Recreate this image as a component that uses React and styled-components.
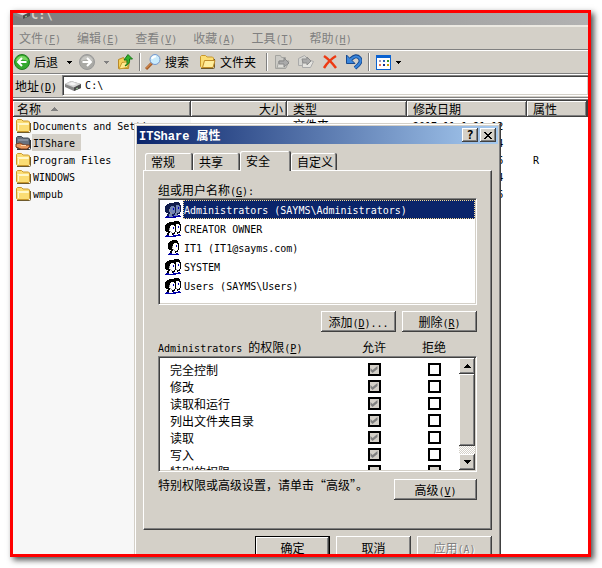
import React from 'react';
import styled, { createGlobalStyle, css } from 'styled-components';

const GlobalStyle = createGlobalStyle`
  * {
    box-sizing: border-box;
  }
  body {
    margin: 0;
    background: #fff;
    color: #000;
    font-family: "DejaVu Sans Mono", "Noto Sans CJK SC", monospace;
    font-size: 12px;
    line-height: 16px;
  }
  button, input {
    font: inherit;
    color: inherit;
    margin: 0;
    padding: 0;
    border-radius: 0;
  }
  svg {
    display: block;
    flex: none;
  }
`;

const FACE = '#d4d0c8';

const raised = css`
  background: ${FACE};
  border: 0;
  box-shadow: inset -1px -1px #404040, inset 1px 1px #fff, inset -2px -2px #808080;
`;

const sunken = css`
  background: #fff;
  border: 1px solid;
  border-color: #808080 #fff #fff #808080;
  box-shadow: inset 1px 1px #404040, inset -1px -1px ${FACE};
`;

const Page = styled.div`
  height: 100vh;
  padding: 10px 11px 11px 10px;
`;

const Frame = styled.div`
  position: relative;
  display: flex;
  flex-direction: column;
  height: 100%;
  overflow: hidden;
  background: ${FACE};
  border: 3px solid #f00;
  box-shadow: 3px 3px 6px rgba(0, 0, 0, 0.7);
`;

/* text: latin runs are half the width of a chinese character */

const Line = styled.span`
  display: inline-block;
  height: 16px;
  vertical-align: top;
  white-space: pre;
  font-family: "Noto Sans CJK SC", sans-serif;
  font-size: 12px;
  line-height: 16px;
`;

const Ansi = styled.span`
  font-family: "DejaVu Sans Mono", monospace;
  font-size: 10px;
  line-height: 10px;
  u {
    text-underline-offset: 1px;
  }
`;

const Text = ({ children }) => (
  <Line>
    {children.split(/([\x20-\x7e]+)/).filter(Boolean).map((run, i) => {
      if (!/^[\x20-\x7e]/.test(run)) return run;
      const [before, after] = run.split('&');
      return (
        <Ansi key={i}>
          {before}
          {after && <u>{after[0]}</u>}
          {after && after.slice(1)}
        </Ansi>
      );
    })}
  </Line>
);

/* explorer */

const WindowTitle = styled.div`
  display: flex;
  align-items: flex-start;
  gap: 1px;
  height: 12px;
  padding-left: 1px;
  background: linear-gradient(90deg, #7d7d7d, #b2b2b2);
  color: ${FACE};
  font-weight: bold;
  line-height: 4px;
  svg {
    margin-top: -7px;
  }
`;

const MenuBar = styled.nav`
  display: flex;
  align-items: center;
  height: 25px;
  padding-left: 6px;
  gap: 16px;
  border-top: 2px solid #ece9e2;
  border-bottom: 1px solid #808080;
  color: #808080;
`;

const MenuItem = styled.button`
  background: none;
  border: 0;
`;

const ToolBar = styled.div`
  display: flex;
  align-items: center;
  height: 24px;
  padding-left: 1px;
  border-top: 1px solid #fff;
  border-bottom: 1px solid #808080;
`;

const Tool = styled.button`
  display: flex;
  align-items: center;
  gap: 4px;
  height: 20px;
  margin-right: ${(p) => p.$after || 8}px;
  background: none;
  border: 0;
`;

const Separator = styled.span`
  width: 2px;
  height: 18px;
  margin-right: ${(p) => p.$after}px;
  border-left: 1px solid #808080;
  border-right: 1px solid #fff;
`;

const AddressBar = styled.div`
  display: flex;
  align-items: center;
  gap: 5px;
  height: 24px;
  padding: 0 0 1px 2px;
  border-top: 1px solid #fff;
  border-bottom: 1px solid #808080;
`;

const AddressField = styled.div`
  ${sunken}
  border-right: 0;
  display: flex;
  align-items: center;
  flex: 1;
  gap: 4px;
  height: 21px;
  padding-left: 2px;
  input {
    flex: 1;
    min-width: 0;
    border: 0;
    outline: 0;
    background: none;
    font-size: 10px;
    line-height: 16px;
  }
`;

const FilePane = styled.div`
  flex: 1;
  min-height: 0;
  overflow: hidden;
  border-top: 1px solid #fff;
  box-shadow: inset 0 1px #808080, inset 0 2px #404040;
  padding-top: 2px;
  background: linear-gradient(90deg, #f7f7f7 178px, #fff 178px);
`;

const FileTable = styled.table`
  width: 100%;
  table-layout: fixed;
  border-collapse: collapse;
  th {
    ${raised}
    height: 16px;
    padding: 0 4px 0 6px;
    font-weight: normal;
    text-align: left;
  }
  th:first-child {
    padding-left: 4px;
  }
  td {
    height: 17px;
    padding: 0 6px;
    line-height: 17px;
  }
  td:first-child {
    padding: 0 2px;
  }
`;

const Col = styled.col`
  width: ${(p) => p.$w}px;
`;

const HeadLabel = styled.span`
  display: flex;
  align-items: center;
  justify-content: ${(p) => (p.$end ? 'flex-end' : 'flex-start')};
  gap: 10px;
  height: 16px;
`;

const FileName = styled.div`
  display: flex;
  align-items: center;
  height: 17px;
`;

const NameText = styled.div`
  height: 17px;
  padding: 0 6px 0 1px;
  background: ${(p) => (p.$selected ? FACE : 'none')};
`;

/* property sheet */

const Dialog = styled.section`
  position: absolute;
  left: 121px;
  top: 110px;
  width: 367px;
  padding: 3px;
  background: ${FACE};
  box-shadow: inset -1px -1px #404040, inset 1px 1px ${FACE}, inset -2px -2px #808080, inset 2px 2px #fff;
`;

const DialogTitle = styled.header`
  display: flex;
  align-items: center;
  gap: 2px;
  height: 18px;
  padding: 0 2px;
  background: linear-gradient(90deg, #0a246a, #a6caf0);
  h1 {
    flex: 1;
    height: 16px;
    margin: 0;
    color: #fff;
    font-size: 12px;
    line-height: 16px;
  }
  h1 span span {
    font-family: "Liberation Mono", monospace;
    font-size: 12px;
  }
`;

const CaptionButton = styled.button`
  ${raised}
  display: flex;
  align-items: center;
  justify-content: center;
  width: 16px;
  height: 14px;
  font-size: 12px;
  font-weight: bold;
  line-height: 12px;
`;

const DialogBody = styled.div`
  padding: 7px 6px;
`;

const Tabs = styled.div`
  position: relative;
  display: flex;
  align-items: flex-end;
  height: 20px;
  margin-bottom: -1px;
  padding-left: 2px;
`;

const Tab = styled.button`
  height: ${(p) => (p.$active ? 20 : 18)}px;
  width: ${(p) => p.$w}px;
  padding-left: 6px;
  text-align: left;
  background: ${FACE};
  border: 0;
  border-radius: 2px 2px 0 0;
  box-shadow: inset -1px 0 #404040, inset 1px 1px #fff, inset -2px 0 #808080;
  ${(p) => !p.$active && css`
    border-bottom: 1px solid #fff;
  `}
`;

const Panel = styled.div`
  height: 360px;
  padding: 11px 14px 0 14px;
  background: ${FACE};
  border: 1px solid;
  border-color: #fff #404040 #404040 #fff;
  box-shadow: inset -1px -1px #808080;
`;

const UserList = styled.ul`
  ${sunken}
  height: 107px;
  margin: 0;
  padding: 1px 1px 1px 6px;
  list-style: none;
`;

const User = styled.li`
  display: flex;
  align-items: center;
  gap: 2px;
  height: 19px;
`;

const UserName = styled.div`
  flex: 1;
  height: 19px;
  padding: 1px 0 0 1px;
  ${(p) => p.$selected && css`
    background: #0a246a;
    color: #fff;
    outline: 1px dotted #f5db95;
    outline-offset: -1px;
  `}
`;

const PushButton = styled.button`
  ${raised}
  flex: none;
  width: ${(p) => p.$w || 75}px;
  height: ${(p) => p.$h || 21}px;
  ${(p) => p.$default && css`
    border: 1px solid #000;
  `}
  &:disabled {
    color: #808080;
    text-shadow: 1px 1px #fff;
  }
`;

const ButtonRow = styled.div`
  display: flex;
  justify-content: flex-end;
  gap: 6px;
  padding: 6px 0;
`;

const PermissionGrid = styled.div`
  display: grid;
  grid-template-columns: 1fr 60px 60px;
  align-items: center;
`;

const PermissionHead = styled(PermissionGrid)`
  height: 18px;
  padding-right: 13px;
  span + span {
    text-align: center;
  }
`;

const PermissionBox = styled.div`
  ${sunken}
  display: flex;
  height: 116px;
  padding: 1px;
`;

const PermissionRows = styled.div`
  flex: 1;
  padding: 3px 0 0 10px;
  overflow: hidden;
`;

const PermissionRow = styled(PermissionGrid)`
  height: 17px;
  justify-items: center;
  margin-right: -5px;
  span {
    justify-self: start;
  }
`;

const Check = styled.input`
  appearance: none;
  width: 13px;
  height: 13px;
  background: #fff;
  border: 2px solid #000;
  &:disabled {
    background: ${FACE};
  }
  &:checked::before {
    content: "";
    display: block;
    width: 9px;
    height: 9px;
    background: #808080;
    clip-path: polygon(1px 3px, 3px 5px, 8px 1px, 8px 4px, 3px 8px, 1px 6px);
  }
`;

const ScrollBar = styled.div`
  display: flex;
  flex-direction: column;
  width: 16px;
  background: repeating-conic-gradient(#fff 0 25%, ${FACE} 0 50%) 0 0 / 2px 2px;
`;

const ScrollButton = styled.button`
  ${raised}
  display: flex;
  align-items: center;
  justify-content: center;
  height: 16px;
`;

const ScrollThumb = styled.div`
  ${raised}
  height: 72px;
  margin-bottom: auto;
`;

const Hint = styled.div`
  display: flex;
  justify-content: space-between;
  padding-top: 5px;
  p {
    margin: 0;
    white-space: nowrap;
  }
  button {
    margin-top: 2px;
  }
`;

/* icons */

const Folder = ({ open, shared }) => (
  <svg width="17" height="16" viewBox="0 0 17 16">
    <path d="M2 14.500h12.500q1 0 1-1V5" fill="none" stroke={shared ? '#333' : '#6e5a2c'} />
    <path d="M1.500 12.500V2.500l1-1h4l1.500 1.500h5.500l1 1v8.500l-1 1h-11z" fill={shared ? '#68717f' : '#fbdd74'} stroke={shared ? '#404854' : '#c9982c'} />
    {!open && !shared && <path d="M2.500 5.500h11v1h-10V12" fill="none" stroke="#fff7c8" />}
    {open && <path d="M3.500 13.500l2-7h10.500l-2 7z" fill="#ffed9b" stroke="#c08b28" />}
    {shared && (
      <>
        <path d="M3 5h10" stroke="#a8b2c2" />
        <path d="M1 9l4-1 4 2h5l1 1-3 3H6l-5-2z" fill="#e99a5f" stroke="#7b3d20" />
        <path d="M6 10.500h5" stroke="#ffd9b0" />
      </>
    )}
  </svg>
);

const Drive = () => (
  <svg width="16" height="16" viewBox="0 0 16 16">
    <path d="M0 6l6-3 10 3v4l-7 3-9-4z" fill="#888" />
    <path d="M0 6l6-3 10 3-7 3.500z" fill="#d4d4d4" />
    <path d="M9 9.500L16 6v4l-7 3z" fill="#4c4c4c" />
    <path d="M3 6l4-2 5 2-4 1.500z" fill="#f4f4f4" />
    <path d="M11 11l2-1" stroke="#9c9" />
  </svg>
);

const RoundArrow = ({ forward }) => (
  <svg width="16" height="16" viewBox="0 0 16 16">
    <circle cx="8" cy="8" r="7.500" fill={forward ? '#a9a9a5' : '#35a92d'} stroke={forward ? '#999' : '#237d20'} />
    <path d="M2 7a6 5 0 0 1 12 0q-6-3-12 0z" fill={forward ? '#c6c6c2' : '#7bd565'} />
    <path d={forward ? 'M3.500 8h8M8 4l4 4-4 4' : 'M12.500 8h-8M8 4L4 8l4 4'} fill="none" stroke="#fff" strokeWidth="2" />
  </svg>
);

const Caret = ({ up, color = '#000' }) => (
  <svg width="7" height="4" viewBox="0 0 7 4" shapeRendering="crispEdges">
    <path d={up ? 'M0 4h7L3.500 0z' : 'M0 0h7L3.500 4z'} fill={color} />
  </svg>
);

const SmallCaret = ({ color = '#000' }) => (
  <svg width="6" height="3" viewBox="0 0 6 3" shapeRendering="crispEdges">
    <path d="M0 0h6L3 3z" fill={color} />
  </svg>
);

const FolderUp = () => (
  <svg width="16" height="16" viewBox="0 0 16 16">
    <path d="M1.500 14.500v-9l5-2 1 2h5l-1 9z" fill="#f5cf58" stroke="#b98a28" />
    <path d="M2 15l3-6.500 7-1-1.500 6z" fill="#ffe98e" stroke="#c6982d" />
    <path d="M8 12q3-2 2-6H7l4-5.500L15.500 5h-3q1 5-4.500 7z" fill="#32b32c" stroke="#187518" />
  </svg>
);

const Magnifier = () => (
  <svg width="16" height="16" viewBox="0 0 16 16">
    <path d="M7 9l-6 6" stroke="#a65d27" strokeWidth="3" />
    <path d="M6.500 9L1 14.500" stroke="#e7a064" />
    <circle cx="10" cy="5.500" r="5" fill="#c9ebfc" stroke="#7498ce" />
    <path d="M7 5q1-3 4-2.500" stroke="#fff" strokeWidth="2" fill="none" />
  </svg>
);

const PageTo = ({ copy }) => (
  <svg width="16" height="16" viewBox="0 0 16 16">
    {copy ? (
      <>
        <path d="M.500 4.500l6-3 4 4v6h-10z" fill="#d5d5d1" stroke="#aaa" />
        <path d="M4.500 6.500h8l3 1-3 6h-8z" fill="#e4e3df" stroke="#aaa" />
        <path d="M4 5h5V3l4 4-4 4V9H5z" fill="#aaa" stroke="#8d8d8d" />
      </>
    ) : (
      <>
        <path d="M1.500 1.500h5l1 2h4v11h-10z" fill="#cbcac5" stroke="#a4a4a0" />
        <path d="M3 14l2-7h10l-3 7z" fill="#deddd8" stroke="#a4a4a0" />
        <path d="M5 7h5V4l5 5-5 4v-3H5z" fill="#aaa" stroke="#888" />
      </>
    )}
  </svg>
);

const Delete = () => (
  <svg width="16" height="16" viewBox="0 0 16 16">
    <path d="M2 2q6 4 12 12M14 2Q7 6 2 14" fill="none" stroke="#ed3a13" strokeWidth="2.500" />
  </svg>
);

const Undo = () => (
  <svg width="16" height="16" viewBox="0 0 16 16">
    <path d="M5 5q5-5 8.500-1T9 14" fill="none" stroke="#17498f" strokeWidth="4" />
    <path d="M.500 1v8.500H9L6.500 7l-3-3z" fill="#3a86dc" stroke="#17498f" />
    <path d="M4 6q6-6 9.500-2T9 14" fill="none" stroke="#3a86dc" strokeWidth="2" />
  </svg>
);

const Views = () => (
  <svg width="15" height="15" viewBox="0 0 15 15" shapeRendering="crispEdges">
    <path d="M0 0h15v15H0z" fill="#0b62d0" />
    <path d="M1 3h13v11H1z" fill="#fff" />
    <path d="M3 5h2v2H3z" fill="#9a9ac0" />
    <path d="M7 5h2v2H7z" fill="#2f62ba" />
    <path d="M11 5h2v2h-2z" fill="#319a31" />
    <path d="M3 9h2v2H3z" fill="#f07050" />
    <path d="M7 9h2v2H7z" fill="#103090" />
    <path d="M11 9h2v2h-2z" fill="#c8a000" />
  </svg>
);

const Head = ({ hair, skin }) => (
  <>
    <path d="M1 3h1V2h1V1h2V0h5v1h1v2h1v7h-1v2H9v1H3v-2h1v-1H2V9H1z" fill={hair} />
    <path d="M6 4h1V3h3v1h1v6h-1v1H8v2h1v1H5v-3h1V9H5V6h1z" fill={skin} />
    <path d="M6 9h1v1H6zM7 10h1v1H7zM5 6h1v2H5z" fill="#9a9a9a" />
    <path d="M9 5h1v2H9z" fill="#0000c0" />
    <path d="M1 14h1v-1h3v1h4v-1h2v1h1v1H1z" fill="#0000a8" />
  </>
);

const UserIcon = ({ single, selected }) => {
  const colors = selected ? { hair: '#101c4c', skin: '#7385b5' } : { hair: '#000', skin: '#fff' };
  return (
    <svg width="16" height="16" viewBox="0 0 16 16" shapeRendering="crispEdges">
      {single ? (
        <g transform="translate(2 0)"><Head {...colors} /></g>
      ) : (
        <>
          <g transform="translate(4 0)"><Head {...colors} /></g>
          <g transform="translate(-1 1)"><Head {...colors} /></g>
        </>
      )}
    </svg>
  );
};

const menus = ['文件(&F)', '编辑(&E)', '查看(&V)', '收藏(&A)', '工具(&T)', '帮助(&H)'];

const files = [
  { name: 'Documents and Settings', date: '2017-11-1 21:12' },
  { name: 'ITShare', date: '2017-11-1 21:14', selected: true },
  { name: 'Program Files', date: '2017-11-1 21:16', attr: 'R' },
  { name: 'WINDOWS', date: '2017-11-1 21:24' },
  { name: 'wmpub', date: '2017-11-1 21:16' },
];

const users = [
  { name: 'Administrators (SAYMS\\Administrators)', selected: true },
  { name: 'CREATOR OWNER' },
  { name: 'IT1 (IT1@sayms.com)', single: true },
  { name: 'SYSTEM' },
  { name: 'Users (SAYMS\\Users)' },
];

const permissions = [
  { name: '完全控制' },
  { name: '修改' },
  { name: '读取和运行' },
  { name: '列出文件夹目录' },
  { name: '读取' },
  { name: '写入' },
  { name: '特别的权限', locked: true },
];

const Explorer = () => (
  <>
    <WindowTitle><Drive />C:\</WindowTitle>
    <MenuBar>
      {menus.map((m) => <MenuItem key={m}><Text>{m}</Text></MenuItem>)}
    </MenuBar>
    <ToolBar>
      <Tool><RoundArrow /><Text>后退</Text></Tool>
      <Tool aria-label="后退列表" $after={7}><SmallCaret /></Tool>
      <Tool aria-label="前进"><RoundArrow forward /></Tool>
      <Tool aria-label="前进列表"><SmallCaret color="#808080" /></Tool>
      <Tool aria-label="向上" $after={6}><FolderUp /></Tool>
      <Separator $after={4} />
      <Tool $after={10}><Magnifier /><Text>搜索</Text></Tool>
      <Tool $after={10}><Folder open /><Text>文件夹</Text></Tool>
      <Separator $after={6} />
      <Tool aria-label="移至"><PageTo /></Tool>
      <Tool aria-label="复制到"><PageTo copy /></Tool>
      <Tool aria-label="删除"><Delete /></Tool>
      <Tool aria-label="撤销" $after={6}><Undo /></Tool>
      <Separator $after={6} />
      <Tool aria-label="查看"><Views /><SmallCaret /></Tool>
    </ToolBar>
    <AddressBar>
      <label htmlFor="address"><Text>地址(&D)</Text></label>
      <AddressField>
        <Drive />
        <input id="address" type="text" defaultValue="C:\" />
      </AddressField>
    </AddressBar>
    <FilePane>
      <FileTable>
        <colgroup>
          <Col $w={178} />
          <Col $w={96} />
          <Col $w={120} />
          <Col $w={120} />
          <Col $w={60} />
          <col />
        </colgroup>
        <thead>
          <tr>
            <th><HeadLabel><Text>名称</Text><Caret up color="#808080" /></HeadLabel></th>
            <th><HeadLabel $end><Text>大小</Text></HeadLabel></th>
            <th><HeadLabel><Text>类型</Text></HeadLabel></th>
            <th><HeadLabel><Text>修改日期</Text></HeadLabel></th>
            <th><HeadLabel><Text>属性</Text></HeadLabel></th>
            <th />
          </tr>
        </thead>
        <tbody>
          {files.map((f) => (
            <tr key={f.name}>
              <td>
                <FileName>
                  <Folder shared={f.selected} />
                  <NameText $selected={f.selected}><Text>{f.name}</Text></NameText>
                </FileName>
              </td>
              <td />
              <td><Text>文件夹</Text></td>
              <td><Text>{f.date}</Text></td>
              <td>{f.attr && <Text>{f.attr}</Text>}</td>
              <td />
            </tr>
          ))}
        </tbody>
      </FileTable>
    </FilePane>
  </>
);

const SecurityPanel = () => (
  <Panel role="tabpanel">
    <Text>组或用户名称(&G):</Text>
    <UserList>
      {users.map((u) => (
        <User key={u.name}>
          <UserIcon single={u.single} selected={u.selected} />
          <UserName $selected={u.selected}><Text>{u.name}</Text></UserName>
        </User>
      ))}
    </UserList>
    <ButtonRow>
      <PushButton><Text>添加(&D)...</Text></PushButton>
      <PushButton><Text>删除(&R)</Text></PushButton>
    </ButtonRow>
    <PermissionHead>
      <Text>Administrators 的权限(&P)</Text>
      <Text>允许</Text>
      <Text>拒绝</Text>
    </PermissionHead>
    <PermissionBox>
      <PermissionRows>
        {permissions.map((p) => (
          <PermissionRow key={p.name}>
            <Text>{p.name}</Text>
            <Check type="checkbox" aria-label={`${p.name} 允许`} defaultChecked={!p.locked} disabled />
            <Check type="checkbox" aria-label={`${p.name} 拒绝`} disabled={p.locked} />
          </PermissionRow>
        ))}
      </PermissionRows>
      <ScrollBar>
        <ScrollButton aria-label="向上滚动"><Caret up /></ScrollButton>
        <ScrollThumb />
        <ScrollButton aria-label="向下滚动"><Caret /></ScrollButton>
      </ScrollBar>
    </PermissionBox>
    <Hint>
      <p><Text>特别权限或高级设置，请单击“高级”。</Text></p>
      <PushButton $w={83}><Text>高级(&V)</Text></PushButton>
    </Hint>
  </Panel>
);

const App = () => (
  <Page>
    <GlobalStyle />
    <Frame>
      <Explorer />
      <Dialog role="dialog" aria-label="ITShare 属性">
        <DialogTitle>
          <h1><Text>ITShare 属性</Text></h1>
          <CaptionButton aria-label="帮助">?</CaptionButton>
          <CaptionButton aria-label="关闭">
            <svg width="8" height="7" viewBox="0 0 8 7" shapeRendering="crispEdges">
              <path d="M0 0h2v1h1v1h2V1h1V0h2v1H7v1H6v1H5v1h1v1h1v1h1v1H6V6H5V5H3v1H2v1H0V6h1V5h1V4h1V3H2V2H1V1H0z" />
            </svg>
          </CaptionButton>
        </DialogTitle>
        <DialogBody>
          <Tabs role="tablist">
            <Tab role="tab" $w={48}><Text>常规</Text></Tab>
            <Tab role="tab" $w={47}><Text>共享</Text></Tab>
            <Tab role="tab" $w={51} $active aria-selected="true"><Text>安全</Text></Tab>
            <Tab role="tab" $w={46}><Text>自定义</Text></Tab>
          </Tabs>
          <SecurityPanel />
          <ButtonRow>
            <PushButton $h={23} $default><Text>确定</Text></PushButton>
            <PushButton $h={23}><Text>取消</Text></PushButton>
            <PushButton $h={23} disabled><Text>应用(&A)</Text></PushButton>
          </ButtonRow>
        </DialogBody>
      </Dialog>
    </Frame>
  </Page>
);

export default App;
